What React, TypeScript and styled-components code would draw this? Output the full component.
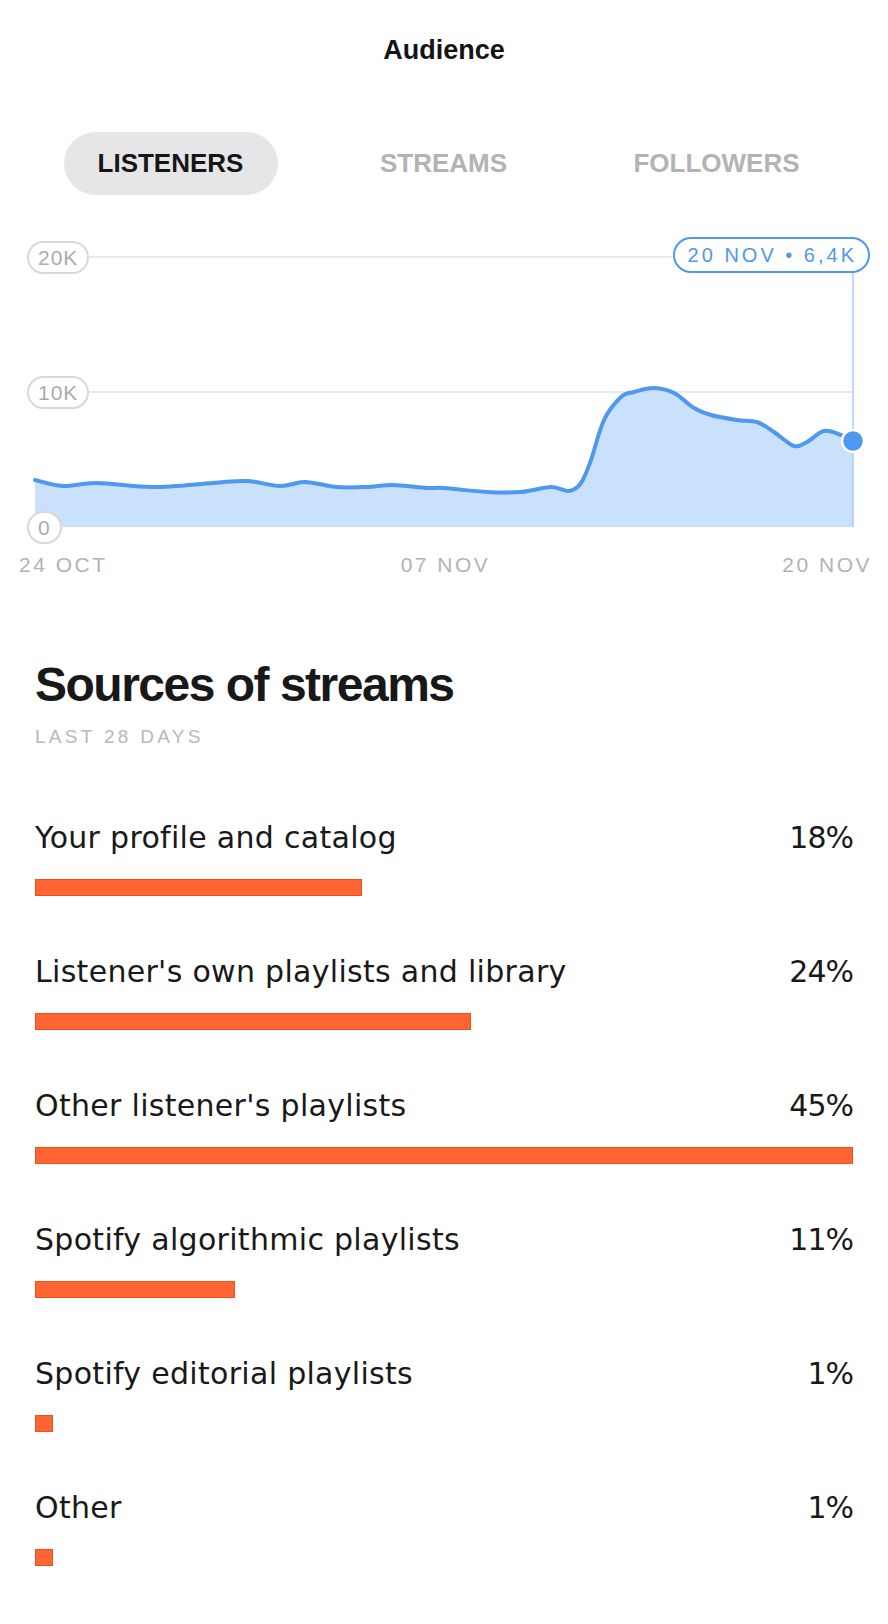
import React from "react";
import styled, { createGlobalStyle } from "styled-components";

const GlobalStyle = createGlobalStyle`
  html, body {
    margin: 0;
    padding: 0;
    background: #ffffff;
  }
  body {
    font-family: "Liberation Sans", Arial, sans-serif;
    color: #181818;
  }
`;

const Page = styled.div`
  width: 888px;
  padding-bottom: 40px;
`;

const Title = styled.h1`
  margin: 34px 0 0;
  height: 32px;
  line-height: 32px;
  font-size: 27px;
  font-weight: 700;
  text-align: center;
  color: #141414;
`;

const Tabs = styled.div`
  display: grid;
  grid-template-columns: repeat(3, 273px);
  padding: 0 35px 0 34px;
  margin-top: 66px;
`;

const Tab = styled.div<{ $active?: boolean }>`
  justify-self: center;
  width: 214px;
  height: 63px;
  border-radius: 32px;
  display: flex;
  align-items: center;
  justify-content: center;
  font-size: 26px;
  font-weight: 700;
  color: ${(p) => (p.$active ? "#161616" : "#b3b3b3")};
  background: ${(p) => (p.$active ? "#e6e6e8" : "transparent")};
`;

const ChartWrap = styled.div`
  position: relative;
  height: 320px;
  margin-top: 35px;
`;

const ChartSvg = styled.svg`
  display: block;
  width: 888px;
  height: 320px;
`;

const AxisPill = styled.div<{ $top: number }>`
  position: absolute;
  left: 27px;
  top: ${(p) => p.$top}px;
  height: 33px;
  box-sizing: border-box;
  padding: 0 9px;
  border: 2px solid #d8d8d8;
  border-radius: 17px;
  background: #ffffff;
  font-size: 21px;
  line-height: 29px;
  letter-spacing: 1px;
  color: #ababab;
`;

const Tooltip = styled.div`
  position: absolute;
  top: 7px;
  right: 18px;
  height: 36px;
  box-sizing: border-box;
  padding: 0 11px 0 13px;
  border: 2px solid #4e98ef;
  border-radius: 18px;
  background: #ffffff;
  font-size: 20px;
  line-height: 32px;
  letter-spacing: 3px;
  color: #4e98ef;
`;

const Dates = styled.div`
  display: grid;
  grid-template-columns: 1fr auto 1fr;
  padding: 0 16px 0 19px;
  margin-top: 3px;
`;

const DateLabel = styled.span<{ $align: "start" | "center" | "end" }>`
  justify-self: ${(p) => p.$align};
  font-size: 21px;
  line-height: 24px;
  letter-spacing: 2.5px;
  color: #b3b3b3;
`;

const Section = styled.section`
  padding: 0 35px;
  margin-top: 80px;
`;

const Heading = styled.h2`
  margin: 0;
  font-size: 48px;
  line-height: 56px;
  font-weight: 700;
  letter-spacing: -1.5px;
  color: #181818;
`;

const Caption = styled.div`
  margin-top: 12px;
  font-size: 19px;
  line-height: 24px;
  letter-spacing: 3.3px;
  color: #b8b8b8;
`;

const List = styled.div`
  margin-top: 71px;
  display: flex;
  flex-direction: column;
  gap: 58px;
`;

const SourceRow = styled.div`
  display: flex;
  flex-direction: column;
  gap: 23px;
`;

const RowHead = styled.div`
  display: flex;
  justify-content: space-between;
  font-family: "DejaVu Sans", sans-serif;
  font-size: 30px;
  line-height: 36px;
  color: #191919;
`;

const Label = styled.span`
  letter-spacing: 0.3px;
`;

const Percent = styled.span`
  letter-spacing: -1px;
`;

const Bar = styled.div`
  height: 17px;
  background: #ff6432;
  box-shadow: inset 0 0 0 1px #e5531f;
`;

const points: [number, number][] = [
  [35, 480], [63, 486], [97, 483], [153, 487], [213, 483], [247, 481],
  [280, 486], [305, 482], [337, 487], [367, 487], [393, 485], [427, 488],
  [444, 488], [487, 492], [521, 492], [551, 487], [569, 491], [581, 483],
  [591, 460], [604, 420], [621, 397], [634, 392], [654, 388], [674, 393],
  [694, 408], [711, 415], [737, 420], [757, 422], [774, 432], [794, 446],
  [807, 442], [824, 431], [841, 435], [853, 441],
];

const TOP = 230;

function smooth(pts: [number, number][]) {
  const p = pts.map(([x, y]) => [x, y - TOP]);
  let d = `M${p[0][0]},${p[0][1]}`;
  for (let i = 0; i < p.length - 1; i++) {
    const p0 = p[i - 1] || p[i];
    const p1 = p[i];
    const p2 = p[i + 1];
    const p3 = p[i + 2] || p2;
    const c1x = p1[0] + (p2[0] - p0[0]) / 6;
    const c1y = p1[1] + (p2[1] - p0[1]) / 6;
    const c2x = p2[0] - (p3[0] - p1[0]) / 6;
    const c2y = p2[1] - (p3[1] - p1[1]) / 6;
    d += ` C${c1x.toFixed(1)},${c1y.toFixed(1)} ${c2x.toFixed(1)},${c2y.toFixed(1)} ${p2[0]},${p2[1]}`;
  }
  return d;
}

const sources = [
  { label: "Your profile and catalog", pct: 18 },
  { label: "Listener's own playlists and library", pct: 24 },
  { label: "Other listener's playlists", pct: 45 },
  { label: "Spotify algorithmic playlists", pct: 11 },
  { label: "Spotify editorial playlists", pct: 1 },
  { label: "Other", pct: 1 },
];

const maxPct = Math.max(...sources.map((s) => s.pct));

function Chart() {
  const line = smooth(points);
  const area = `${line} L853,297 L35,297 Z`;
  return (
    <ChartWrap>
      <ChartSvg viewBox="0 0 888 320">
        <line x1="35" y1="27" x2="853" y2="27" stroke="#e2e2e2" strokeWidth="1.5" />
        <line x1="35" y1="162" x2="853" y2="162" stroke="#e2e2e2" strokeWidth="1.5" />
        <path d={area} fill="#c9e1fb" />
        <line x1="853" y1="43" x2="853" y2="297" stroke="#a9cdf7" strokeWidth="1.5" />
        <path d={line} fill="none" stroke="#4e98ef" strokeWidth="4" strokeLinecap="round" />
        <circle cx="853" cy="211" r="11" fill="#4e98ef" stroke="#ffffff" strokeWidth="2.5" />
      </ChartSvg>
      <AxisPill $top={10.5}>20K</AxisPill>
      <AxisPill $top={145.5}>10K</AxisPill>
      <AxisPill $top={281}>0</AxisPill>
      <Tooltip>20 NOV • 6,4K</Tooltip>
    </ChartWrap>
  );
}

function App() {
  return (
    <Page>
      <GlobalStyle />
      <Title>Audience</Title>
      <Tabs>
        <Tab $active>LISTENERS</Tab>
        <Tab>STREAMS</Tab>
        <Tab>FOLLOWERS</Tab>
      </Tabs>
      <Chart />
      <Dates>
        <DateLabel $align="start">24 OCT</DateLabel>
        <DateLabel $align="center">07 NOV</DateLabel>
        <DateLabel $align="end">20 NOV</DateLabel>
      </Dates>
      <Section>
        <Heading>Sources of streams</Heading>
        <Caption>LAST 28 DAYS</Caption>
        <List>
          {sources.map((s) => (
            <SourceRow key={s.label}>
              <RowHead>
                <Label>{s.label}</Label>
                <Percent>{s.pct}%</Percent>
              </RowHead>
              <Bar style={{ width: `${(s.pct / maxPct) * 100}%` }} />
            </SourceRow>
          ))}
        </List>
      </Section>
    </Page>
  );
}

export default App;
